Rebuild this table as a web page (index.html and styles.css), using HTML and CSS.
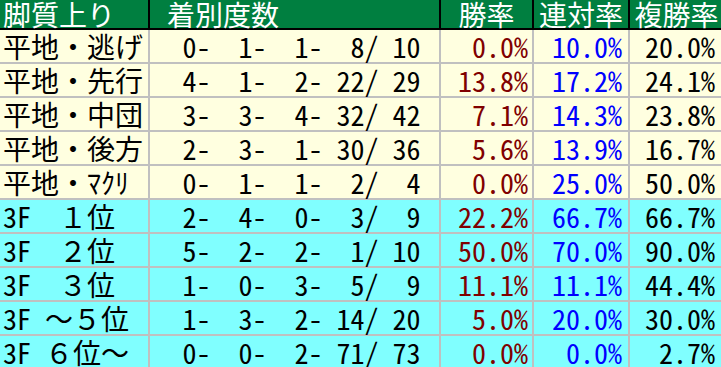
FILE: index.html
```html
<!DOCTYPE html>
<html lang="ja">
<head>
<meta charset="utf-8">
<link rel="stylesheet" href="styles.css">
</head>
<body>
<div class="tbl">
  <div class="c h c1">脚質上り</div>
  <div class="c h c2"> 着別度数</div>
  <div class="c h c3 ctr">勝率</div>
  <div class="c h c4 ctr">連対率</div>
  <div class="c h c5 ctr">複勝率</div>

  <div class="c y c1">平地・逃げ</div><div class="c y c2"> 0-  1-  1-  8/ 10</div><div class="c y c3">0.0%</div><div class="c y c4">10.0%</div><div class="c y c5">20.0%</div>
  <div class="c y c1">平地・先行</div><div class="c y c2"> 4-  1-  2- 22/ 29</div><div class="c y c3">13.8%</div><div class="c y c4">17.2%</div><div class="c y c5">24.1%</div>
  <div class="c y c1">平地・中団</div><div class="c y c2"> 3-  3-  4- 32/ 42</div><div class="c y c3">7.1%</div><div class="c y c4">14.3%</div><div class="c y c5">23.8%</div>
  <div class="c y c1">平地・後方</div><div class="c y c2"> 2-  3-  1- 30/ 36</div><div class="c y c3">5.6%</div><div class="c y c4">13.9%</div><div class="c y c5">16.7%</div>
  <div class="c y c1">平地・ﾏｸﾘ</div><div class="c y c2"> 0-  1-  1-  2/  4</div><div class="c y c3">0.0%</div><div class="c y c4">25.0%</div><div class="c y c5">50.0%</div>

  <div class="c b c1">3F　１位</div><div class="c b c2"> 2-  4-  0-  3/  9</div><div class="c b c3">22.2%</div><div class="c b c4">66.7%</div><div class="c b c5">66.7%</div>
  <div class="c b c1">3F　２位</div><div class="c b c2"> 5-  2-  2-  1/ 10</div><div class="c b c3">50.0%</div><div class="c b c4">70.0%</div><div class="c b c5">90.0%</div>
  <div class="c b c1">3F　３位</div><div class="c b c2"> 1-  0-  3-  5/  9</div><div class="c b c3">11.1%</div><div class="c b c4">11.1%</div><div class="c b c5">44.4%</div>
  <div class="c b c1">3F ～５位</div><div class="c b c2"> 1-  3-  2- 14/ 20</div><div class="c b c3">5.0%</div><div class="c b c4">20.0%</div><div class="c b c5">30.0%</div>
  <div class="c b c1">3F ６位～</div><div class="c b c2"> 0-  0-  2- 71/ 73</div><div class="c b c3">0.0%</div><div class="c b c4">0.0%</div><div class="c b c5">2.7%</div>
</div>
</body>
</html>
```

FILE: styles.css
```css
html, body {
  margin: 0;
  padding: 0;
  background: #ffffff;
  overflow: hidden;
}
.tbl {
  display: grid;
  grid-template-columns: 150px 291px 93px 96px 95px;
  grid-template-rows: 30px repeat(10, 34px);
  font-family: "Noto Sans Mono CJK JP", "Noto Sans CJK JP", "DejaVu Sans Mono", monospace;
  font-size: 28px;
  line-height: 28px;
  width: 725px;
}
.c {
  border-right: 2px solid #c0c0c0;
  border-bottom: 2px solid #c0c0c0;
  white-space: pre;
  display: flex;
  align-items: center;
  color: #000000;
}
.h {
  background: #007f40;
  color: #ffffff;
  border-color: #000000;
}
.y { background: #ffffe0; }
.b { background: #80ffff; }
.c1 { padding-left: 3px; justify-content: flex-start; }
.c2 { justify-content: center; }
.h.c2 { justify-content: flex-start; padding-left: 3px; }
.c3 { justify-content: flex-end; padding-right: 4px; color: #800000; }
.c4 { justify-content: flex-end; padding-right: 6px; color: #0000ff; }
.c5 { justify-content: flex-end; padding-right: 8px; }
.h.ctr { justify-content: center; padding-right: 0; color: #ffffff; }
```
